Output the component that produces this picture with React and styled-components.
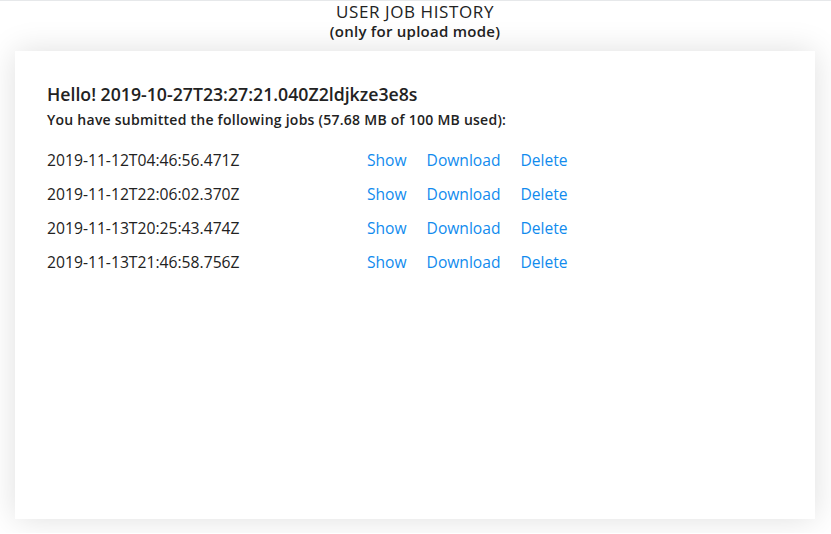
import React from "react";
import styled, { createGlobalStyle } from "styled-components";

const Global = createGlobalStyle`
  html, body { margin: 0; padding: 0; background: #fff; }
  body { font-family: "Open Sans", "Noto Sans", sans-serif; color: #222; }
`;

const Page = styled.div`
  border-top: 1px solid #e6e8ea;
  height: 533px;
  display: flex;
  flex-direction: column;
  align-items: stretch;
  padding: 0 16px 0 15px;
  box-sizing: border-box;
`;

const Header = styled.header`
  text-align: center;
  padding-top: 1px;
  height: 50px;
  box-sizing: border-box;
`;

const Title = styled.div`
  font-size: 17px;
  line-height: 20px;
  letter-spacing: 0.6px;
  color: #222;
`;

const Subtitle = styled.div`
  font-size: 15px;
  line-height: 18px;
  letter-spacing: 0.25px;
  font-weight: 600;
  color: #222;
`;

const Card = styled.main`
  background: #fff;
  height: 468px;
  box-shadow: 0 0 30px rgba(0, 0, 0, 0.13);
  padding: 31px 32px;
  box-sizing: border-box;
`;

const Hello = styled.h2`
  margin: 0;
  font-size: 17.7px;
  line-height: 24px;
  font-weight: 600;
  color: #222;
`;

const Info = styled.p`
  margin: 5px 0 19px;
  font-size: 14px;
  line-height: 18px;
  letter-spacing: 0.25px;
  font-weight: 600;
  color: #222;
`;

const Table = styled.div`
  display: grid;
  grid-template-columns: 320px auto;
  row-gap: 10px;
`;

const Cell = styled.div`
  font-size: 15.7px;
  line-height: 24px;
  color: #222;
`;

const Actions = styled.div`
  display: flex;
  gap: 20px;
  font-size: 15.6px;
  line-height: 24px;
`;

const Link = styled.a`
  color: #118bee;
  text-decoration: none;
  cursor: pointer;
`;

const jobs = [
  "2019-11-12T04:46:56.471Z",
  "2019-11-12T22:06:02.370Z",
  "2019-11-13T20:25:43.474Z",
  "2019-11-13T21:46:58.756Z",
];

export default function App() {
  return (
    <>
      <Global />
      <Page>
        <Header>
          <Title>USER JOB HISTORY</Title>
          <Subtitle>(only for upload mode)</Subtitle>
        </Header>
        <Card>
          <Hello>Hello! 2019-10-27T23:27:21.040Z2ldjkze3e8s</Hello>
          <Info>You have submitted the following jobs (57.68 MB of 100 MB used):</Info>
          <Table>
            {jobs.map((j) => (
              <React.Fragment key={j}>
                <Cell>{j}</Cell>
                <Actions>
                  <Link>Show</Link>
                  <Link>Download</Link>
                  <Link>Delete</Link>
                </Actions>
              </React.Fragment>
            ))}
          </Table>
        </Card>
      </Page>
    </>
  );
}
